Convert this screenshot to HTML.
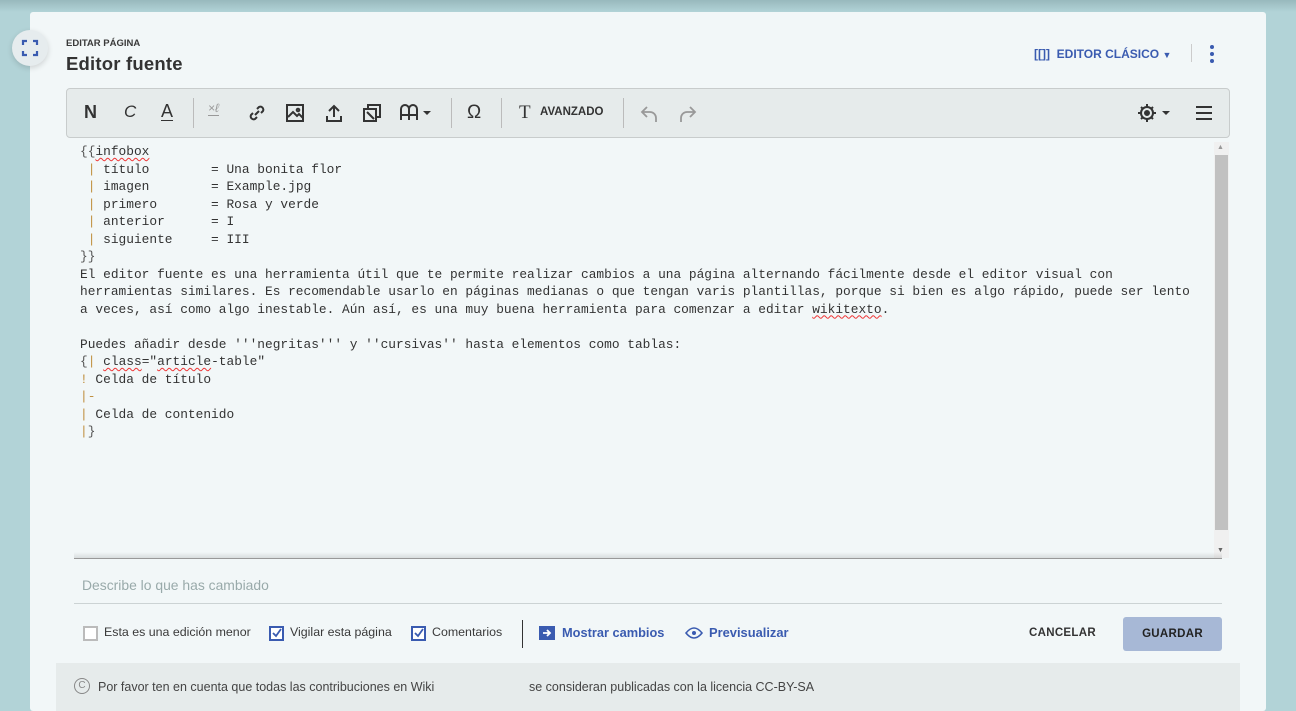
<!DOCTYPE html>
<html><head><meta charset="utf-8"><style>
*{box-sizing:border-box;margin:0;padding:0}
body{width:1296px;height:711px;overflow:hidden;background:#b2d3d7;font-family:"Liberation Sans",sans-serif;position:relative}
.topbar{position:absolute;left:0;top:0;width:1296px;height:12px;background:linear-gradient(#98b9bd,#b2d3d7)}
.card{position:absolute;left:30px;top:12px;width:1236px;height:699px;background:#f2f7f8;border-radius:3px}
.fs{position:absolute;left:12px;top:30px;width:36px;height:36px;border-radius:50%;background:#e6ecee;box-shadow:0 2px 6px rgba(0,0,0,.15)}
.abs{position:absolute}
.mono{font-family:"Liberation Mono","DejaVu Sans Mono",monospace;font-size:12.85px;line-height:17.5px;color:#333;white-space:pre}
.o{color:#c09040}
.d{color:#555}
.sq{text-decoration:underline wavy #e33;text-decoration-thickness:1px;text-underline-offset:2px}
.tb{position:absolute;left:66px;top:88px;width:1164px;height:50px;background:#e6ebeb;border:1px solid #c8cccc;border-radius:4px}
.ic{position:absolute;top:14px}
.sep{position:absolute;top:9px;width:1px;height:30px;background:#bbb}
.cb{position:absolute;top:626px;width:15px;height:15px;border:2px solid #3a5bb0;background:#fff}
.lbl{position:absolute;top:625px;font-size:12.4px;color:#3a3a3a}
</style></head><body>
<div class="topbar"></div>
<div class="card"></div>
<div class="fs"><svg width="36" height="36" viewBox="0 0 36 36" fill="none" stroke="#3a5bb0" stroke-width="2.2"><path d="M11 15v-4h4M21 11h4v4M25 21v4h-4M15 25h-4v-4"/></svg></div>
<div class="abs" style="left:66px;top:38px;font-size:9.5px;font-weight:bold;color:#3a3a3a">EDITAR PÁGINA</div>
<div class="abs" style="left:66px;top:53px;font-size:18.5px;font-weight:bold;color:#333;letter-spacing:.2px">Editor fuente</div>
<div class="abs" style="left:1034px;top:47px;font-size:12px;font-weight:bold;color:#3a5bb0">[[]]&nbsp; EDITOR CLÁSICO <span style="font-size:9px">▼</span></div>
<div class="abs" style="left:1191px;top:44px;width:1px;height:18px;background:#ccc"></div>
<svg class="abs" style="left:1208px;top:44px" width="8" height="20"><circle cx="4" cy="3" r="2" fill="#3a5bb0"/><circle cx="4" cy="10" r="2" fill="#3a5bb0"/><circle cx="4" cy="17" r="2" fill="#3a5bb0"/></svg>

<div class="tb">
<div class="ic" style="left:17px;top:13px;font-size:18px;font-weight:bold;color:#333">N</div>
<div class="ic" style="left:57px;top:13px;font-size:17px;font-style:italic;color:#333">C</div>
<div class="ic" style="left:94px;top:12px;font-size:18px;color:#333;text-decoration:underline;text-underline-offset:3px">A</div>
<div class="sep" style="left:126px"></div>
<div class="ic" style="left:141px;top:12px;font-size:12px;font-style:italic;color:#999;border-bottom:1px solid #999">×ℓ</div>
<svg class="ic" style="left:180px" width="20" height="20" fill="none" stroke="#333" stroke-width="2"><path d="M8 12l4-4M6 10l-2 2a3 3 0 004 4l2-2M14 10l2-2a3 3 0 00-4-4l-2 2"/></svg>
<svg class="ic" style="left:218px" width="20" height="20" fill="none" stroke="#333" stroke-width="2"><rect x="2" y="2" width="16" height="16"/><path d="M3 14l5-5 4 4 2-2 4 4"/><circle cx="13" cy="7" r="1.3"/></svg>
<svg class="ic" style="left:257px" width="20" height="20" fill="none" stroke="#333" stroke-width="2"><path d="M10 14V3M5 8l5-5 5 5M3 13v5h14v-5"/></svg>
<svg class="ic" style="left:295px" width="20" height="20" fill="none" stroke="#333" stroke-width="2"><path d="M6 6V2h12v12h-4"/><rect x="2" y="6" width="12" height="12"/><path d="M5 9l7 7"/></svg>
<svg class="ic" style="left:332px" width="36" height="20" fill="none" stroke="#333" stroke-width="2"><path d="M2 17V6a4 4 0 018 0v11M10 6a4 4 0 018 0v11M2 12h16"/><path d="M24 8h8l-4 4z" fill="#333" stroke="none"/></svg>
<div class="sep" style="left:384px"></div>
<div class="ic" style="left:400px;top:13px;font-size:19px;color:#333">Ω</div>
<div class="sep" style="left:434px"></div>
<div class="ic" style="left:452px;top:13px;font-size:19px;color:#333;font-family:'Liberation Serif',serif">T</div>
<div class="ic" style="left:473px;top:17px;font-size:11.5px;font-weight:bold;color:#333">AVANZADO</div>
<div class="sep" style="left:556px"></div>
<svg class="ic" style="left:572px" width="22" height="22" fill="none" stroke="#999" stroke-width="1.8"><path d="M8 4L3 9l5 5M3 9h8a6 6 0 016 6v4"/></svg>
<svg class="ic" style="left:609px" width="22" height="22" fill="none" stroke="#999" stroke-width="1.8"><path d="M14 4l5 5-5 5M19 9h-8a6 6 0 00-6 6v4"/></svg>
<svg class="ic" style="left:1070px;top:13px" width="40" height="22" fill="none" stroke="#333" stroke-width="2"><circle cx="10" cy="11" r="6"/><circle cx="10" cy="11" r="2" fill="#333"/><path d="M10 2v3M10 17v3M1 11h3M16 11h3M4 5l2 2M14 15l2 2M16 5l-2 2M4 17l2-2"/><path d="M25 9h8l-4 4z" fill="#333" stroke="none"/></svg>
<svg class="ic" style="left:1127px" width="20" height="20" stroke="#333" stroke-width="2"><path d="M2 4h16M2 10h16M2 16h16"/></svg>
</div>

<div class="abs mono" style="left:80px;top:143px"><span class="d">{{</span><span class="sq">infobox</span>
 <span class="o">|</span> título        = Una bonita flor
 <span class="o">|</span> imagen        = Example.jpg
 <span class="o">|</span> primero       = Rosa y verde
 <span class="o">|</span> anterior      = I
 <span class="o">|</span> siguiente     = III
<span class="d">}}</span>
El editor fuente es una herramienta útil que te permite realizar cambios a una página alternando fácilmente desde el editor visual con
herramientas similares. Es recomendable usarlo en páginas medianas o que tengan varis plantillas, porque si bien es algo rápido, puede ser lento
a veces, así como algo inestable. Aún así, es una muy buena herramienta para comenzar a editar <span class="sq">wikitexto</span>.

Puedes añadir desde '''negritas''' y ''cursivas'' hasta elementos como tablas:
<span class="d">{</span><span class="o">|</span> <span class="sq">class</span>="<span class="sq">article</span>-table"
<span class="o">!</span> Celda de título
<span class="o">|-</span>
<span class="o">|</span> Celda de contenido
<span class="o">|</span><span class="d">}</span></div>

<div class="abs" style="left:1214px;top:142px;width:15px;height:416px;background:#f0f0f0"></div>
<div class="abs" style="left:1215px;top:155px;width:13px;height:375px;background:#c1c1c1"></div>
<div class="abs" style="left:1217px;top:144px;font-size:7px;color:#999">▲</div>
<div class="abs" style="left:1217px;top:547px;font-size:7px;color:#666">▼</div>
<div class="abs" style="left:74px;top:552px;width:1148px;height:7px;background:linear-gradient(rgba(0,0,0,0),rgba(0,0,0,.12))"></div>
<div class="abs" style="left:74px;top:558px;width:1148px;height:1px;background:#999"></div>

<div class="abs" style="left:82px;top:577px;font-size:13.9px;color:#9aa">Describe lo que has cambiado</div>
<div class="abs" style="left:74px;top:603px;width:1148px;height:1px;background:#ccd3d4"></div>

<div class="cb" style="left:83px;border-color:#bbb"></div>
<div class="lbl" style="left:104px">Esta es una edición menor</div>
<div class="cb" style="left:269px"><svg width="11" height="11" style="position:absolute;left:0;top:0"><path d="M2 5l3 3 5-7" fill="none" stroke="#3a5bb0" stroke-width="1.8"/></svg></div>
<div class="lbl" style="left:290px">Vigilar esta página</div>
<div class="cb" style="left:411px"><svg width="11" height="11" style="position:absolute;left:0;top:0"><path d="M2 5l3 3 5-7" fill="none" stroke="#3a5bb0" stroke-width="1.8"/></svg></div>
<div class="lbl" style="left:432px">Comentarios</div>
<div class="abs" style="left:522px;top:620px;width:1px;height:28px;background:#333"></div>
<svg class="abs" style="left:539px;top:626px" width="16" height="14"><rect x="0" y="0" width="16" height="14" fill="#3a5bb0"/><path d="M4 7h7M8 4l3 3-3 3" stroke="#fff" stroke-width="1.8" fill="none"/></svg>
<div class="abs" style="left:562px;top:625px;font-size:12.8px;font-weight:bold;color:#3a5bb0">Mostrar cambios</div>
<svg class="abs" style="left:685px;top:626px" width="18" height="14"><path d="M1 7q8-10 16 0q-8 10-16 0z" fill="none" stroke="#3a5bb0" stroke-width="1.6"/><circle cx="9" cy="7" r="2" fill="#3a5bb0"/></svg>
<div class="abs" style="left:709px;top:625px;font-size:12.9px;font-weight:bold;color:#3a5bb0">Previsualizar</div>
<div class="abs" style="left:1029px;top:627px;font-size:11.5px;font-weight:bold;color:#333;letter-spacing:.3px">CANCELAR</div>
<div class="abs" style="left:1123px;top:617px;width:99px;height:34px;background:#a7b8d6;border-radius:3px;font-size:11.5px;font-weight:bold;color:#222;letter-spacing:.3px;text-align:center;line-height:34px">GUARDAR</div>

<div class="abs" style="left:56px;top:663px;width:1184px;height:48px;background:#e6ebeb"></div>
<div class="abs" style="left:74px;top:678px;width:16px;height:16px;border:1.5px solid #888;border-radius:50%;font-size:10px;color:#888;text-align:center;line-height:13px">C</div>
<div class="abs" style="left:98px;top:680px;font-size:12.5px;color:#444">Por favor ten en cuenta que todas las contribuciones en Wiki</div>
<div class="abs" style="left:529px;top:680px;font-size:12.5px;color:#444">se consideran publicadas con la licencia CC-BY-SA</div>
</body></html>
